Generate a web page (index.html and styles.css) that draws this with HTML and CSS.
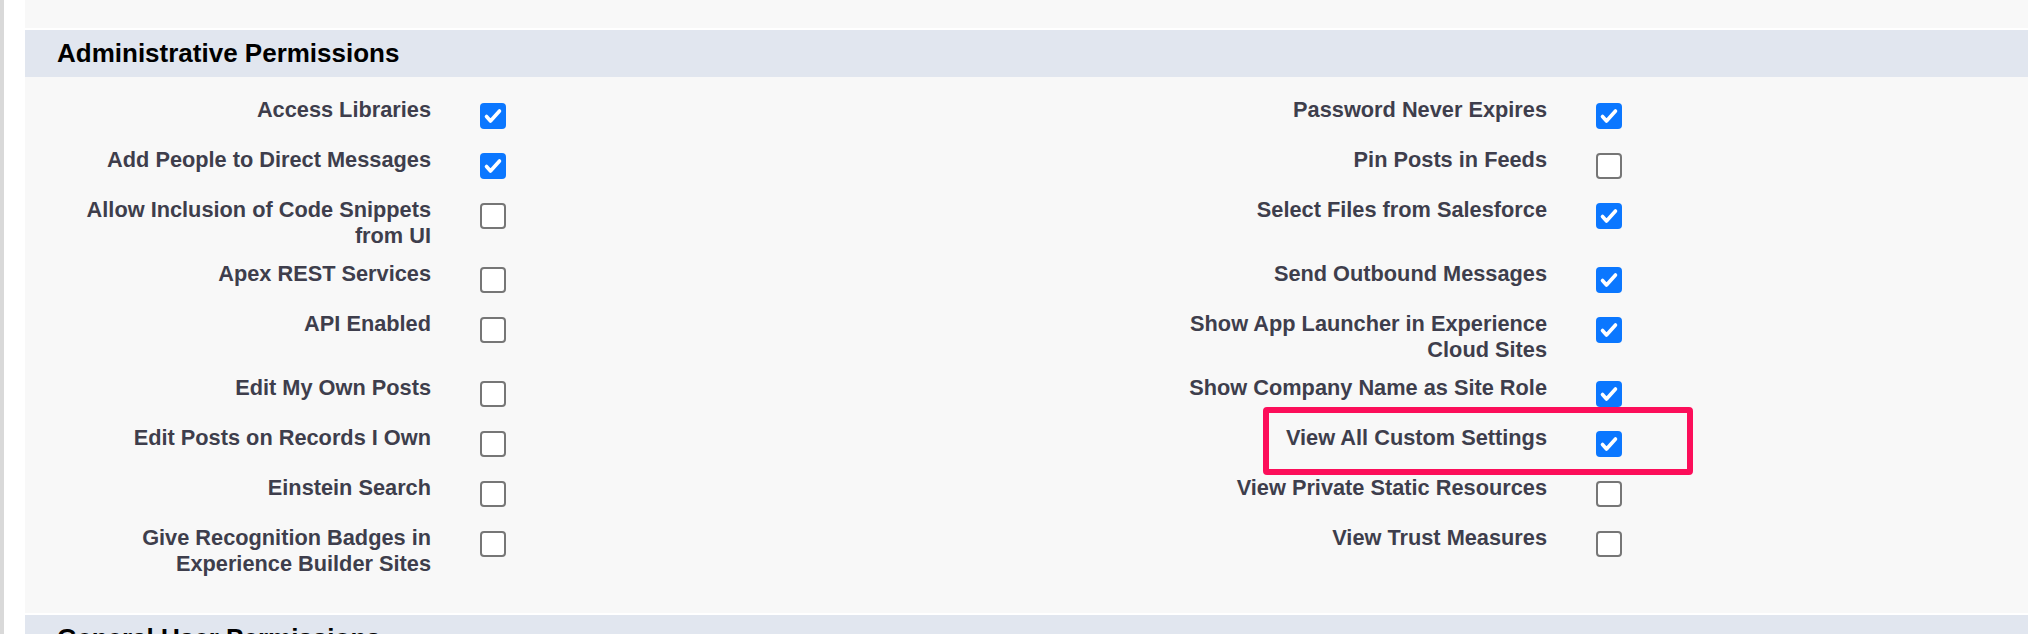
FILE: index.html
```html
<!DOCTYPE html>
<html lang="en">
<head>
<meta charset="utf-8">
<title>Administrative Permissions</title>
<link rel="stylesheet" href="styles.css">
</head>
<body>
<div class="page">
  <div class="content">
    <div class="section">
      <div class="section-body prev-body"></div>
    </div>

    <div class="section">
      <div class="section-head"><h3>Administrative Permissions</h3></div>
      <div class="section-body perm-grid">
        <div class="perm-label">Access Libraries</div>
        <div class="perm-value"><span class="cb on"><svg viewBox="0 0 26 26"><path d="M6.5 13.5 L10.5 18 L19.5 8"/></svg></span></div>
        <div class="perm-label">Password Never Expires</div>
        <div class="perm-value"><span class="cb on"><svg viewBox="0 0 26 26"><path d="M6.5 13.5 L10.5 18 L19.5 8"/></svg></span></div>

        <div class="perm-label">Add People to Direct Messages</div>
        <div class="perm-value"><span class="cb on"><svg viewBox="0 0 26 26"><path d="M6.5 13.5 L10.5 18 L19.5 8"/></svg></span></div>
        <div class="perm-label">Pin Posts in Feeds</div>
        <div class="perm-value"><span class="cb"></span></div>

        <div class="perm-label">Allow Inclusion of Code Snippets from UI</div>
        <div class="perm-value"><span class="cb"></span></div>
        <div class="perm-label">Select Files from Salesforce</div>
        <div class="perm-value"><span class="cb on"><svg viewBox="0 0 26 26"><path d="M6.5 13.5 L10.5 18 L19.5 8"/></svg></span></div>

        <div class="perm-label">Apex REST Services</div>
        <div class="perm-value"><span class="cb"></span></div>
        <div class="perm-label">Send Outbound Messages</div>
        <div class="perm-value"><span class="cb on"><svg viewBox="0 0 26 26"><path d="M6.5 13.5 L10.5 18 L19.5 8"/></svg></span></div>

        <div class="perm-label">API Enabled</div>
        <div class="perm-value"><span class="cb"></span></div>
        <div class="perm-label">Show App Launcher in Experience Cloud Sites</div>
        <div class="perm-value"><span class="cb on"><svg viewBox="0 0 26 26"><path d="M6.5 13.5 L10.5 18 L19.5 8"/></svg></span></div>

        <div class="perm-label">Edit My Own Posts</div>
        <div class="perm-value"><span class="cb"></span></div>
        <div class="perm-label">Show Company Name as Site Role</div>
        <div class="perm-value"><span class="cb on"><svg viewBox="0 0 26 26"><path d="M6.5 13.5 L10.5 18 L19.5 8"/></svg></span></div>

        <div class="perm-label">Edit Posts on Records I Own</div>
        <div class="perm-value"><span class="cb"></span></div>
        <div class="perm-label highlighted">View All Custom Settings<span class="highlight-box"></span></div>
        <div class="perm-value"><span class="cb on"><svg viewBox="0 0 26 26"><path d="M6.5 13.5 L10.5 18 L19.5 8"/></svg></span></div>

        <div class="perm-label">Einstein Search</div>
        <div class="perm-value"><span class="cb"></span></div>
        <div class="perm-label">View Private Static Resources</div>
        <div class="perm-value"><span class="cb"></span></div>

        <div class="perm-label">Give Recognition Badges in Experience Builder Sites</div>
        <div class="perm-value"><span class="cb"></span></div>
        <div class="perm-label">View Trust Measures</div>
        <div class="perm-value"><span class="cb"></span></div>
      </div>
    </div>

    <div class="section">
      <div class="section-head"><h3>General User Permissions</h3></div>
      <div class="section-body next-body"></div>
    </div>
  </div>
</div>
</body>
</html>
```

FILE: styles.css
```css
html, body {
  margin: 0;
  padding: 0;
  height: 100%;
  overflow: hidden;
  background: #ffffff;
}

body {
  font-family: "Liberation Sans", Arial, Helvetica, sans-serif;
}

.page {
  border-left: 4px solid #d9d9d9;
  padding-left: 21px;
  background: #ffffff;
  min-height: 100%;
  box-sizing: border-box;
}

.content {
  display: flex;
  flex-direction: column;
  gap: 2px;
}

.section-body {
  background: #f8f8f8;
}

.prev-body {
  height: 28px;
}

.next-body {
  height: 200px;
}

.section-head {
  background: #e1e6ef;
  height: 47px;
  padding-left: 32px;
}

.section-head h3 {
  margin: 0;
  font-size: 26px;
  line-height: 47px;
  font-weight: 700;
  color: #000000;
}

.perm-grid {
  display: grid;
  grid-template-columns: 418px 698px 418px 1fr;
  padding: 14px 0 30px;
}

.perm-label {
  padding: 6px 12px 7px 26px;
  text-align: right;
  font-size: 21.75px;
  line-height: 25.5px;
  font-weight: 700;
  color: #3e3e4c;
}

.highlighted {
  position: relative;
}

.highlight-box {
  position: absolute;
  left: 122px;
  top: -12px;
  width: 430px;
  height: 68px;
  box-sizing: border-box;
  border: 6px solid #fc0e5a;
  border-radius: 4px;
}

.perm-value {
  padding: 12px 0 12px 37px;
  display: flex;
  align-items: flex-start;
}

.cb {
  width: 26px;
  height: 26px;
  box-sizing: border-box;
  border-radius: 4px;
  border: 2px solid #767676;
  background: #ffffff;
  display: block;
}

.cb.on {
  border: none;
  background: #0b77ff;
}

.cb svg {
  display: block;
  width: 26px;
  height: 26px;
}

.cb svg path {
  fill: none;
  stroke: #ffffff;
  stroke-width: 3.6;
  stroke-linecap: round;
  stroke-linejoin: round;
}
```
